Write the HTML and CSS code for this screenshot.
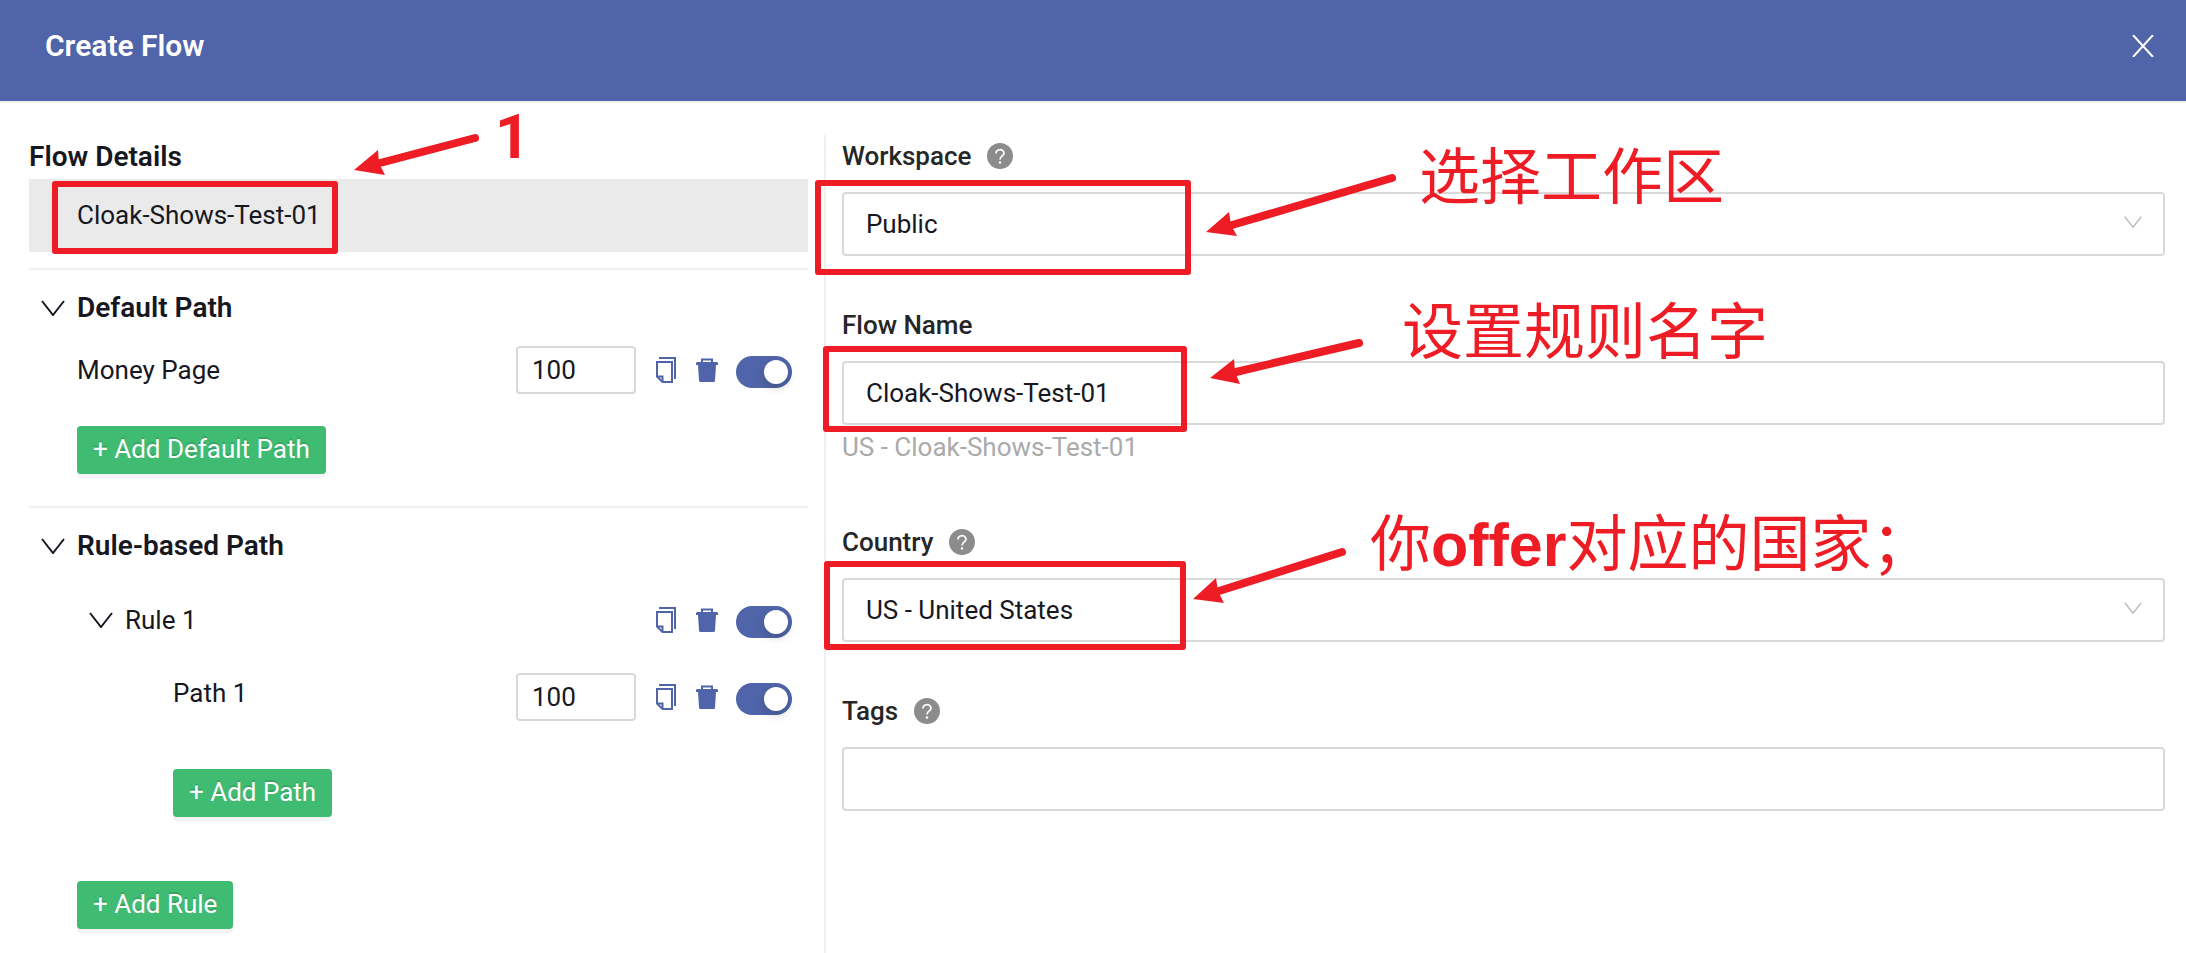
FILE: index.html
```html
<!DOCTYPE html>
<html lang="en">
<head>
    <meta charset="UTF-8">
    <meta name="viewport" content="width=device-width, initial-scale=1.0">
    <title>Create Flow</title>
    <link rel="stylesheet" href="styles.css">
</head>
<body>

    <!-- Shared icons -->
    <svg class="sprite" aria-hidden="true">
        <symbol id="icon-chevron" viewBox="0 0 24 16">
            <path d="M1 1 L12 15 L23 1" fill="none" stroke="currentColor" stroke-width="2"/>
        </symbol>
        <symbol id="icon-copy" viewBox="0 0 20 26">
            <path d="M3 1 H19 V22" fill="none" stroke="currentColor" stroke-width="2"/>
            <path d="M1 5 H16 V25 H6.5 L1 19.5 Z" fill="none" stroke="currentColor" stroke-width="2"/>
            <path d="M1 19.5 H6.5 V25" fill="none" stroke="currentColor" stroke-width="2"/>
        </symbol>
        <symbol id="icon-trash" viewBox="0 0 22 24">
            <path d="M6 5 V1.500 H16 V5" fill="none" stroke="currentColor" stroke-width="2"/>
            <path d="M1 4 H21 L22 5 V7 H20 L19 22.500 Q19 24 17.500 24 H4.500 Q3 24 3 22.500 L2 7 H0 V5 Z" fill="currentColor"/>
        </symbol>
        <symbol id="icon-help" viewBox="0 0 26 26">
            <circle cx="13" cy="13" r="13" fill="#8c8c8c"/>
            <path d="M9 10.500 C9 5.500 17 5.500 17 10.300 C17 13 13 13 13 16.500" fill="none" stroke="#fff" stroke-width="1.700"/>
            <circle cx="13" cy="19.500" r="1.200" fill="#fff"/>
        </symbol>
    </svg>

    <header class="drawer-header">
        <h1>Create Flow</h1>
        <button class="close-btn" aria-label="Close">
            <svg viewBox="0 0 22 22"><path d="M1 0 L21 22 M21 0 L1 22" stroke="currentColor" stroke-width="2"/></svg>
        </button>
    </header>

    <main class="drawer-body">

        <!-- Left column: flow tree -->
        <aside class="tree">
            <h2 class="tree-title">Flow Details</h2>
            <div class="flow-item">
                Cloak-Shows-Test-01
                <div class="note note-flow">
                    <div class="mark"></div>
                    <svg class="arrow" viewBox="0 0 126 42">
                        <path d="M121 5 L26 30" class="shaft"/>
                        <path d="M0 37 L24 17 L25 30 L31 42 Z" class="head"/>
                    </svg>
                    <span class="note-text">1</span>
                </div>
            </div>

            <section class="group">
                <h2 class="group-title"><svg class="chevron"><use href="#icon-chevron"/></svg>Default Path</h2>
                <div class="row">
                    <label class="row-name" for="money-weight">Money Page</label>
                    <input class="weight" type="text" id="money-weight" value="100">
                    <button class="icon-btn" aria-label="Copy Money Page"><svg class="copy"><use href="#icon-copy"/></svg></button>
                    <button class="icon-btn" aria-label="Delete Money Page"><svg class="trash"><use href="#icon-trash"/></svg></button>
                    <input class="switch" type="checkbox" aria-label="Enable Money Page" checked>
                </div>
                <button class="add-btn">+ Add Default Path</button>
            </section>

            <section class="group">
                <h2 class="group-title"><svg class="chevron"><use href="#icon-chevron"/></svg>Rule-based Path</h2>
                <div class="row rule-row">
                    <svg class="chevron"><use href="#icon-chevron"/></svg>
                    <span class="row-name">Rule 1</span>
                    <button class="icon-btn" aria-label="Copy Rule 1"><svg class="copy"><use href="#icon-copy"/></svg></button>
                    <button class="icon-btn" aria-label="Delete Rule 1"><svg class="trash"><use href="#icon-trash"/></svg></button>
                    <input class="switch" type="checkbox" aria-label="Enable Rule 1" checked>
                </div>
                <div class="row path-row">
                    <label class="row-name" for="path-weight">Path 1</label>
                    <input class="weight" type="text" id="path-weight" value="100">
                    <button class="icon-btn" aria-label="Copy Path 1"><svg class="copy"><use href="#icon-copy"/></svg></button>
                    <button class="icon-btn" aria-label="Delete Path 1"><svg class="trash"><use href="#icon-trash"/></svg></button>
                    <input class="switch" type="checkbox" aria-label="Enable Path 1" checked>
                </div>
                <button class="add-btn add-path">+ Add Path</button>
                <button class="add-btn add-rule">+ Add Rule</button>
            </section>
        </aside>

        <!-- Right column: form -->
        <form class="form">
            <div class="field">
                <div class="field-label">
                    <label for="workspace">Workspace</label>
                    <svg class="help"><use href="#icon-help"/></svg>
                </div>
                <div class="control">
                    <select id="workspace">
                        <option>Public</option>
                    </select>
                    <svg class="select-arrow"><use href="#icon-chevron"/></svg>
                    <div class="note note-workspace">
                        <div class="mark"></div>
                        <svg class="arrow" viewBox="0 0 191 64">
                            <path d="M186 5 L26 52" class="shaft"/>
                            <path d="M0 59 L23 39 L25 52 L31 63 Z" class="head"/>
                        </svg>
                        <span class="note-text">选择工作区</span>
                    </div>
                </div>
            </div>

            <div class="field">
                <div class="field-label">
                    <label for="flow-name">Flow Name</label>
                </div>
                <div class="control">
                    <input type="text" id="flow-name" value="Cloak-Shows-Test-01">
                    <div class="note note-name">
                        <div class="mark"></div>
                        <svg class="arrow" viewBox="0 0 154 48">
                            <path d="M149 5 L26 34" class="shaft"/>
                            <path d="M0 40 L24 21 L25 34 L30 46 Z" class="head"/>
                        </svg>
                        <span class="note-text">设置规则名字</span>
                    </div>
                </div>
                <p class="hint">US - Cloak-Shows-Test-01</p>
            </div>

            <div class="field">
                <div class="field-label">
                    <label for="country">Country</label>
                    <svg class="help"><use href="#icon-help"/></svg>
                </div>
                <div class="control">
                    <select id="country">
                        <option>US - United States</option>
                    </select>
                    <svg class="select-arrow"><use href="#icon-chevron"/></svg>
                    <div class="note note-country">
                        <div class="mark"></div>
                        <svg class="arrow" viewBox="0 0 154 58">
                            <path d="M149 5 L26 44" class="shaft"/>
                            <path d="M0 52 L23 31 L25 44 L31 56 Z" class="head"/>
                        </svg>
                        <span class="note-text">你<b>offer</b>对应的国家；</span>
                    </div>
                </div>
            </div>

            <div class="field">
                <div class="field-label">
                    <label for="tags">Tags</label>
                    <svg class="help"><use href="#icon-help"/></svg>
                </div>
                <div class="control">
                    <input type="text" id="tags">
                </div>
            </div>
        </form>
    </main>

</body>
</html>
```

FILE: styles.css
```css
/* Global Styles */
* {
    margin: 0;
    padding: 0;
    box-sizing: border-box;
}

body {
    background-color: #fff;
    font-family: Roboto, "Noto Sans CJK SC", sans-serif;
    font-size: 26px;
    line-height: 40px;
    color: #17181f;
    min-height: 100vh;
    display: flex;
    flex-direction: column;
    overflow-x: hidden;
}

button,
input,
select {
    font: inherit;
    color: inherit;
}

button {
    border: none;
    background: none;
    cursor: pointer;
}

svg {
    display: block;
}

.sprite {
    position: absolute;
    width: 0;
    height: 0;
}

/* Header */
.drawer-header {
    display: flex;
    justify-content: space-between;
    align-items: flex-start;
    padding: 26px 32px 35px 45px;
    background-color: #5064a9;
    border-bottom: 2px solid #f0f0f0;
    color: #fff;
}

.drawer-header h1 {
    font-size: 30px;
    line-height: 40px;
    font-weight: 600;
}

.close-btn {
    height: 40px;
}

.close-btn svg {
    width: 22px;
    height: 22px;
}

.drawer-body {
    flex: 1;
    display: grid;
    grid-template-columns: 49fr 81fr;
    padding-top: 32px;
}

/* Flow tree */
.tree {
    padding: 0 16px 24px 29px;
}

.tree-title,
.group-title {
    font-size: 28px;
    line-height: 44px;
    font-weight: 600;
}

.flow-item {
    position: relative;
    padding-left: 48px;
    line-height: 73px;
    margin-bottom: 16px;
    background-color: #eaeaea;
}

.group {
    border-top: 2px solid #f0f0f0;
    padding: 16px 0 32px 48px;
}

.group-title {
    display: flex;
    align-items: center;
    gap: 12px;
    margin-left: -36px;
}

.chevron {
    width: 24px;
    height: 16px;
}

.row {
    display: flex;
    align-items: center;
    height: 48px;
    margin-top: 16px;
    padding-right: 16px;
}

.row-name {
    flex: 1;
}

.rule-row {
    height: 40px;
    margin-top: 32px;
    padding-left: 12px;
}

.rule-row .chevron {
    margin-right: 12px;
}

.path-row {
    margin-top: 33px;
    padding-left: 96px;
}

.path-row .row-name {
    align-self: flex-start;
}

.weight {
    width: 120px;
    height: 48px;
    padding: 0 14px;
    border: 2px solid #d9d9d9;
    border-radius: 4px;
    background-color: #fff;
}

.icon-btn {
    width: 20px;
    margin-left: 20px;
}

.icon-btn .copy {
    width: 20px;
    height: 26px;
}

.icon-btn .trash {
    width: 22px;
    height: 24px;
}

.switch {
    appearance: none;
    width: 56px;
    height: 32px;
    margin: 4px 0 0 20px;
    padding: 4px;
    border-radius: 16px;
    background-color: #5064a9;
    cursor: pointer;
}

.switch::before {
    content: "";
    display: block;
    width: 24px;
    height: 24px;
    margin-left: auto;
    border-radius: 50%;
    background-color: #fff;
    box-shadow: 0 4px 8px rgba(0, 35, 11, 0.2);
}

.icon-btn svg {
    color: #5064a9;
}

.add-btn {
    display: block;
    height: 48px;
    margin-top: 32px;
    padding: 0 16px 2px;
    border-radius: 4px;
    background-color: #3fbb72;
    color: #fff;
    text-shadow: 0 -2px 0 rgba(0, 0, 0, 0.12);
    box-shadow: 0 4px 0 rgba(0, 0, 0, 0.045);
}

.add-path {
    margin: 48px 0 0 96px;
}

.add-rule {
    margin-top: 64px;
}

/* Form */
.form {
    padding: 1px 21px 24px 16px;
    border-left: 2px solid #f0f0f0;
}

.field {
    margin-bottom: 49px;
}

.field-label {
    display: flex;
    align-items: center;
    gap: 16px;
    height: 40px;
    margin-bottom: 16px;
    font-weight: 500;
    color: #262626;
}

.help {
    width: 26px;
    height: 26px;
}

.control {
    position: relative;
}

.control input,
.control select {
    display: block;
    appearance: none;
    width: 100%;
    height: 64px;
    padding: 0 22px;
    border: 2px solid #d9d9d9;
    border-radius: 4px;
    background-color: #fff;
}

.select-arrow {
    position: absolute;
    top: 24px;
    right: 23px;
    width: 18px;
    height: 12px;
    color: #bfbfbf;
}

.hint {
    line-height: 44px;
    margin-bottom: 53px;
    color: #aaa;
}

/* Red annotations, laid over the controls */
.note {
    position: absolute;
    top: 0;
    left: 0;
    color: #ee1c24;
    pointer-events: none;
}

.mark,
.arrow,
.note-text {
    position: absolute;
}

.mark {
    border: 6px solid #ee1c24;
    border-radius: 3px;
}

.shaft {
    stroke: #ee1c24;
    stroke-width: 8;
    stroke-linecap: round;
}

.head {
    fill: #ee1c24;
}

.note-text {
    font-family: "Liberation Sans", "Noto Sans CJK SC", sans-serif;
    font-size: 61px;
    line-height: 72px;
    white-space: nowrap;
}

.note-flow .mark {
    top: 2px;
    left: 23px;
    width: 286px;
    height: 73px;
}

.note-flow .arrow {
    top: -46px;
    left: 325px;
    width: 126px;
    height: 42px;
}

.note-flow .note-text {
    top: -78px;
    left: 466px;
    font-family: Roboto, sans-serif;
    font-weight: 700;
}

.note-workspace .mark {
    top: -12px;
    left: -27px;
    width: 376px;
    height: 95px;
}

.note-workspace .arrow {
    top: -19px;
    left: 364px;
    width: 191px;
    height: 64px;
}

.note-workspace .note-text {
    top: -50px;
    left: 577px;
}

.note-name .mark {
    top: -15px;
    left: -19px;
    width: 364px;
    height: 86px;
}

.note-name .arrow {
    top: -23px;
    left: 368px;
    width: 154px;
    height: 48px;
}

.note-name .note-text {
    top: -64px;
    left: 560px;
}

.note-country .mark {
    top: -17px;
    left: -18px;
    width: 362px;
    height: 89px;
}

.note-country .arrow {
    top: -31px;
    left: 351px;
    width: 154px;
    height: 58px;
}

.note-country .note-text {
    top: -69px;
    left: 528px;
}
```
